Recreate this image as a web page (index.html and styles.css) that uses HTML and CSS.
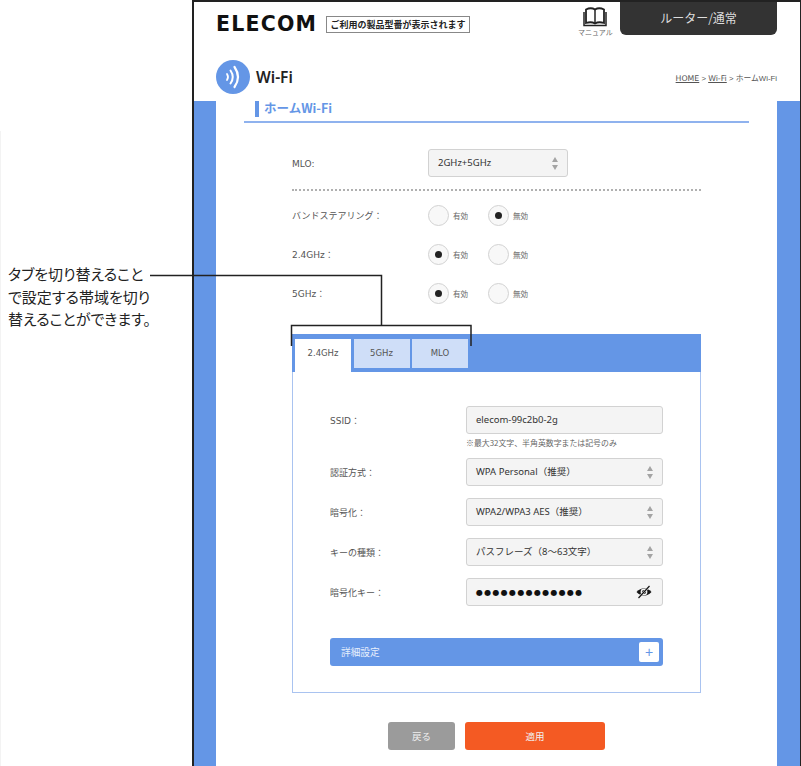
FILE: index.html
```html
<!DOCTYPE html>
<html lang="ja">
  <head>
    <meta charset="utf-8">
    <title>ホームWi-Fi</title>
    <link rel="stylesheet" href="styles.css">
  </head>
  <body>
<div class="page">
  <div class="note">タブを切り替えること<br>で設定する帯域を切り<br>替えることができます。</div>

  <div class="frame">
    <div class="header">
      <div class="topBar">
        <div class="logo">ELECOM</div>
        <div class="modelBox">ご利用の製品型番が表示されます</div>
        <div class="manual">
          <svg class="bookIcon" width="24" height="20" viewBox="0 0 24 20">
            <path d="M3 2.500 C6 1 9.500 1 12 2.500 C14.500 1 18 1 21 2.500 V16 C18 15 14.500 15 12 16.500 C9.500 15 6 15 3 16 Z" fill="none" stroke="#222" stroke-width="1.800"/>
            <path d="M12 2.500 V16.500" stroke="#222" stroke-width="1.500"/>
            <path d="M1 5 V18.500 H23 V5" fill="none" stroke="#222" stroke-width="1.500"/>
          </svg>
          <span>マニュアル</span>
        </div>
        <div class="modeBtn">ルーター/通常</div>
      </div>
      <div class="titleBar">
        <div class="wifiIcon">
          <svg width="34" height="34" viewBox="0 0 34 34">
            <g fill="none" stroke="#fff" stroke-linecap="round">
              <path d="M11 14 Q13 17 11 20" stroke-width="1.800"/>
              <path d="M14.500 10.500 Q19 17 14.500 23.500" stroke-width="2"/>
              <path d="M18.500 7 Q25.500 17 18.500 27" stroke-width="2.200"/>
            </g>
          </svg>
        </div>
        <div class="pageTitle">Wi-Fi</div>
        <div class="crumbs"><u>HOME</u> &gt; <u>Wi-Fi</u> &gt; ホームWi-Fi</div>
      </div>
    </div>

    <div class="band">
      <div class="sheet">
        <div class="sheetHead"><h2>ホームWi-Fi</h2></div>

        <div class="form">
          <div class="optRow mloRow">
            <div class="lbl">MLO:</div>
            <div class="field selectField smallField">2GHz+5GHz<i class="arrows"></i></div>
          </div>
          <div class="optRow radioRow">
            <div class="lbl">バンドステアリング：</div>
            <div class="radios">
              <span class="radio"></span><span class="radioText">有効</span>
              <span class="radio on"></span><span class="radioText">無効</span>
            </div>
          </div>
          <div class="optRow radioRow">
            <div class="lbl">2.4GHz：</div>
            <div class="radios">
              <span class="radio on"></span><span class="radioText">有効</span>
              <span class="radio"></span><span class="radioText">無効</span>
            </div>
          </div>
          <div class="optRow radioRow">
            <div class="lbl">5GHz：</div>
            <div class="radios">
              <span class="radio on"></span><span class="radioText">有効</span>
              <span class="radio"></span><span class="radioText">無効</span>
            </div>
          </div>

          <div class="tabPanel">
            <div class="tabs">
              <div class="tab active">2.4GHz</div>
              <div class="tab">5GHz</div>
              <div class="tab">MLO</div>
            </div>
            <div class="tabBody">
              <div class="row hintRow">
                <div class="lbl">SSID：</div>
                <div>
                  <div class="field">elecom-99c2b0-2g</div>
                  <div class="hint">※最大32文字、半角英数字または記号のみ</div>
                </div>
              </div>
              <div class="row">
                <div class="lbl">認証方式：</div>
                <div class="field selectField">WPA Personal（推奨）<i class="arrows"></i></div>
              </div>
              <div class="row">
                <div class="lbl">暗号化：</div>
                <div class="field selectField">WPA2/WPA3 AES（推奨）<i class="arrows"></i></div>
              </div>
              <div class="row">
                <div class="lbl">キーの種類：</div>
                <div class="field selectField">パスフレーズ（8～63文字）<i class="arrows"></i></div>
              </div>
              <div class="row">
                <div class="lbl">暗号化キー：</div>
                <div class="field keyField">
                  <span class="dots">●●●●●●●●●●●●●</span>
                  <svg class="eyeIcon" width="16" height="14" viewBox="0 0 16 14">
                    <path d="M0.500 7 Q8 -0.500 15.500 7 Q8 14.500 0.500 7 Z" fill="#161616"/>
                    <circle cx="8" cy="7" r="3.400" fill="#f4f4f4"/>
                    <circle cx="8" cy="7" r="2" fill="#161616"/>
                    <path d="M2.500 13 L13.500 1" stroke="#f4f4f4" stroke-width="2.200"/>
                    <path d="M2.500 13 L13.500 1" stroke="#161616" stroke-width="1.200"/>
                  </svg>
                </div>
              </div>
              <div class="detailBar">
                <span>詳細設定</span>
                <span class="plusBox">+</span>
              </div>
            </div>
          </div>

          <div class="actions">
            <button class="btnBack">戻る</button>
            <button class="btnApply">適用</button>
          </div>
        </div>
      </div>
    </div>
  </div>

  <!-- callout line from the note to the tabs -->
  <svg class="callout" width="801" height="766" viewBox="0 0 801 766">
    <path d="M150 275.500 H381.500 V325.500" fill="none" stroke="#222" stroke-width="1.500"/>
    <path d="M291.500 346 V325.500 H471 V346" fill="none" stroke="#222" stroke-width="1.500"/>
  </svg>
</div>
  </body>
</html>
```

FILE: styles.css
```css
* {
  box-sizing: border-box;
  margin: 0px;
  padding: 0px;
  font-family: "DejaVu Sans", "Noto Sans CJK JP", sans-serif;
}
:root {
  --blue: #6496e6;
  --lightBlue: #cfdef8;
  --panelLine: #a9c3f0;
  --text: #555555;
  --fieldBG: #f4f4f4;
  --fieldBorder: #d2d2d2;
}
body {
  background-color: white;
  color: var(--text);
}
.page {
  position: relative;
  display: flex;
  height: 766px;
  overflow: hidden;
}
.callout {
  position: absolute;
  left: 0px;
  top: 0px;
}
.note {
  position: relative;
  width: 192px;
  flex-shrink: 0;
  padding-top: 263px;
  padding-left: 8px;
  font-family: "Noto Sans CJK JP", sans-serif;
  font-size: 15px;
  font-feature-settings: "palt";
  line-height: 22.500px;
  color: #222222;
  white-space: nowrap;
}
/* faint edge of the next picture in the manual */
.note::before {
  content: "";
  position: absolute;
  left: 0px;
  top: 131px;
  bottom: 0px;
  width: 1px;
  background-color: #f3f3f3;
}
.frame {
  flex: 1;
  display: flex;
  flex-direction: column;
  border-left: 2px solid #222222;
  border-top: 2px solid #222222;
  border-right: 1px solid #222222;
}

/* header */
.header {
  height: 99px;
  padding: 0px 23px 0px 22px;
}
.topBar {
  display: flex;
  align-items: flex-start;
  height: 33px;
}
.logo {
  font-family: "DejaVu Sans", sans-serif;
  font-weight: bold;
  font-size: 20.500px;
  line-height: 20px;
  letter-spacing: 1.200px;
  color: #111111;
  margin-top: 12px;
  width: 110px;
}
.modelBox {
  width: 144px;
  height: 17px;
  margin-top: 14px;
  border: 1px solid #888888;
  font-family: "Noto Sans CJK JP", sans-serif;
  font-weight: bold;
  font-size: 9px;
  line-height: 15px;
  color: #222222;
  text-align: center;
  white-space: nowrap;
}
.manual {
  width: 34px;
  margin-left: 108px;
  margin-top: 5px;
  text-align: center;
  font-family: "Noto Sans CJK JP", sans-serif;
  font-size: 7px;
  line-height: 10px;
  color: #666666;
  white-space: nowrap;
}
.bookIcon {
  display: block;
  margin: 0px auto;
}
.modeBtn {
  width: 157px;
  height: 33px;
  margin-left: 8px;
  background-color: #333333;
  border-radius: 0px 0px 6px 6px;
  color: #dddddd;
  font-family: "Noto Sans CJK JP", sans-serif;
  font-size: 12px;
  line-height: 32px;
  text-align: center;
}
.titleBar {
  display: flex;
  align-items: center;
  height: 34px;
  margin-top: 25px;
}
.wifiIcon {
  width: 34px;
  height: 34px;
  border-radius: 50%;
  background-color: var(--blue);
}
.wifiIcon svg {
  display: block;
}
.pageTitle {
  margin-left: 6px;
  font-family: "Noto Sans", sans-serif;
  font-weight: 600;
  font-size: 15.500px;
  color: #222222;
}
.crumbs {
  margin-left: auto;
  font-family: "Liberation Sans", "Noto Sans CJK JP", sans-serif;
  font-size: 7.800px;
  color: #555555;
}

/* main area */
.band {
  flex: 1;
  background-color: var(--blue);
  padding: 0px 23px 0px 22px;
}
.sheet {
  height: 100%;
  background-color: white;
  padding: 0px 28px;
}
.sheetHead {
  height: 22px;
  padding-left: 11px;
  border-bottom: 2px solid #8fb2ee;
}
.sheetHead h2 {
  height: 16px;
  border-left: 4px solid var(--blue);
  padding-left: 5px;
  font-family: "Noto Sans CJK JP", sans-serif;
  font-size: 12.500px;
  font-weight: bold;
  line-height: 14px;
  color: var(--blue);
}
.form {
  padding: 0px 48px;
}
.optRow {
  display: grid;
  grid-template-columns: 136px 1fr;
  align-items: center;
}
.mloRow {
  margin-top: 26px;
  padding-bottom: 12px;
  border-bottom: 2px dotted #b0b0b0;
}
.mloRow .lbl {
  padding-top: 2px;
}
.radioRow {
  margin-top: 14px;
  height: 21px;
}
.radioRow + .radioRow {
  margin-top: 18px;
}
.lbl {
  font-size: 9px;
  color: #555555;
  white-space: nowrap;
}

/* inputs */
.field {
  position: relative;
  height: 28px;
  width: 197px;
  padding-left: 9px;
  background-color: var(--fieldBG);
  border: 1px solid var(--fieldBorder);
  border-radius: 3px;
  font-family: "Noto Sans", "Noto Sans CJK JP", sans-serif;
  font-size: 9.500px;
  line-height: 25px;
  color: #333333;
  white-space: nowrap;
}
.smallField {
  width: 140px;
}
.arrows {
  position: absolute;
  right: 8px;
  top: 7px;
  width: 7px;
  height: 13px;
}
.arrows::before,
.arrows::after {
  content: "";
  position: absolute;
  left: 0px;
  border-left: 3.500px solid transparent;
  border-right: 3.500px solid transparent;
}
.arrows::before {
  top: 0px;
  border-bottom: 5.500px solid #a4a4a4;
}
.arrows::after {
  bottom: 0px;
  border-top: 5.500px solid #a4a4a4;
}
.keyField {
  display: flex;
  align-items: center;
}
.dots {
  font-family: "DejaVu Sans", sans-serif;
  font-size: 8px;
  letter-spacing: 1.300px;
  color: #111111;
}
.eyeIcon {
  position: absolute;
  right: 10px;
  top: 6px;
}
.radios {
  display: flex;
  align-items: center;
}
.radio {
  position: relative;
  width: 21px;
  height: 21px;
  border: 1px solid #d2d2d2;
  border-radius: 50%;
  background-color: #f8f8f8;
}
.radio.on::after {
  content: "";
  position: absolute;
  left: 6px;
  top: 6px;
  width: 7px;
  height: 7px;
  border-radius: 50%;
  background-color: #222222;
}
.radioText {
  width: 39px;
  padding-left: 4px;
  padding-bottom: 1px;
  font-size: 7.500px;
  color: #666666;
}

/* tabs */
.tabPanel {
  margin-top: 30px;
}
.tabs {
  display: flex;
  align-items: flex-start;
  gap: 2.500px;
  height: 38px;
  padding: 5px 0px 0px 3px;
  background-color: var(--blue);
}
.tab {
  width: 56px;
  height: 29px;
  background-color: var(--lightBlue);
  font-size: 8.500px;
  line-height: 29px;
  text-align: center;
  color: #555555;
}
.tab.active {
  height: 33px;
  background-color: white;
}
.tabBody {
  height: 321px;
  padding: 34px 37px 0px 37px;
  border: 1px solid var(--panelLine);
  border-top: 0px;
}
.row {
  display: grid;
  grid-template-columns: 136px 1fr;
  margin-bottom: 12px;
}
.row > .lbl {
  height: 28px;
  line-height: 30px;
}
.hintRow {
  margin-bottom: 0px;
}
.hint {
  height: 24px;
  font-family: "Noto Sans CJK JP", sans-serif;
  font-size: 7.900px;
  line-height: 18px;
  color: #666666;
  white-space: nowrap;
}
.detailBar {
  display: flex;
  align-items: center;
  justify-content: space-between;
  height: 28px;
  margin-top: 32px;
  padding: 0px 4px 0px 11px;
  background-color: var(--blue);
  border-radius: 3px;
  color: #e8effc;
  font-size: 9.700px;
}
.plusBox {
  width: 20px;
  height: 20px;
  background-color: white;
  border-radius: 2px;
  color: var(--blue);
  font-family: "Liberation Sans", sans-serif;
  font-size: 14px;
  line-height: 20px;
  text-align: center;
}

/* bottom buttons */
.actions {
  display: flex;
  justify-content: center;
  gap: 10px;
  margin-top: 29px;
}
button {
  height: 28px;
  border: 0px;
  border-radius: 3px;
  color: #f0f0f0;
  font-size: 9.500px;
}
.btnBack {
  width: 67px;
  background-color: #9b9b9b;
}
.btnApply {
  width: 140px;
  background-color: #f45a23;
}
```
